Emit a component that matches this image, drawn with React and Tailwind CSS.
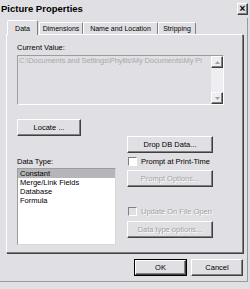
export default function App() {
  const raised =
    "border border-t-white border-l-white border-r-[#404040] border-b-[#404040] shadow-[inset_-1px_-1px_0_#808080]";
  const disabledText = "text-[#a3a3a3] [text-shadow:1px_1px_0_#ffffff]";

  const Button = ({ w, disabled, children }) => (
    <div
      className={`${w} h-[17px] flex items-center justify-center text-[7.5px] leading-none ${raised} ${
        disabled ? disabledText : "text-black"
      }`}
    >
      {children}
    </div>
  );

  const Check = ({ label, disabled }) => (
    <div className="flex items-center h-[9px] ml-[1px]">
      <div
        className={`w-[9px] h-[9px] border border-t-[#808080] border-l-[#808080] border-r-white border-b-white ${
          disabled ? "bg-[#e0dfe3]" : "bg-white"
        }`}
      />
      <span className={`ml-[4px] text-[7.5px] leading-[9px] ${disabled ? disabledText : "text-black"}`}>
        {label}
      </span>
    </div>
  );

  const Tab = ({ w, active, children, className = "" }) => (
    <div
      className={`${w} ${
        active ? "h-[15px] relative z-10 bg-[#e0dfe3]" : "h-[12px] mb-[1px]"
      } flex items-center justify-center text-[7px] leading-none border-t border-l border-t-white border-l-white border-r border-r-[#808080] rounded-t-[2px] ${className}`}
    >
      {children}
    </div>
  );

  const items = ["Constant", "Merge/Link Fields", "Database", "Formula"];

  return (
    <div className="w-[250px] h-[289px] bg-[#e0dfe3] overflow-hidden font-['Liberation_Sans',Arial,sans-serif] text-black">
      {/* title bar */}
      <div className="h-[18px] flex items-center justify-between pl-[1px] pr-[2px]">
        <span className="text-[9.5px] font-bold leading-none">Picture Properties</span>
        <div className={`w-[11px] h-[12px] flex items-center justify-center ${raised}`}>
          <span className="text-[10px] font-bold leading-none -mt-[1px]">×</span>
        </div>
      </div>

      <div className="w-[248px] h-[264px] border-r border-b border-[#9a9a9a] pt-[2px]">
        {/* tabs */}
        <div className="flex items-end h-[15px] pl-[7px]">
          <Tab w="w-[31px]" active>
            Data
          </Tab>
          <Tab w="w-[44px]" className="ml-[1px]">
            Dimensions
          </Tab>
          <Tab w="w-[75px]">Name and Location</Tab>
          <Tab w="w-[38px]">Stripping</Tab>
        </div>

        {/* panel */}
        <div className="-mt-[1px] ml-[6px] w-[237px] h-[219px] border border-t-white border-l-white border-r-[#808080] border-b-[#808080] shadow-[1px_1px_0_#404040] pt-[8px] pl-[10px]">
          <div className="text-[7.5px] leading-[9px]">Current Value:</div>
          <div className="mt-[3px] w-[207px] h-[50px] flex border border-t-[#9c9c9c] border-l-[#9c9c9c] border-r-white border-b-white">
            <div className="flex-1 overflow-hidden whitespace-nowrap pl-[1px] text-[7.5px] leading-[9px] tracking-[-0.1px] text-[#a9a9a9]">
              {"C:\\Documents and Settings\\Phyllis\\My Documents\\My Pi"}
            </div>
            <div className="w-[12px] flex flex-col justify-between bg-[#eeeef2]">
              <div className={`h-[12px] flex items-center justify-center ${raised}`}>
                <svg width="5" height="3" viewBox="0 0 5 3">
                  <path d="M0 3L2.5 0L5 3Z" fill="#a0a0a0" />
                </svg>
              </div>
              <div className={`h-[12px] flex items-center justify-center ${raised}`}>
                <svg width="5" height="3" viewBox="0 0 5 3">
                  <path d="M0 0L2.5 3L5 0Z" fill="#a0a0a0" />
                </svg>
              </div>
            </div>
          </div>

          <div className="flex gap-[11px]">
            {/* left column */}
            <div className="w-[99px]">
              <div className="mt-[14px]">
                <Button w="w-[64px]">Locate ...</Button>
              </div>
              <div className="mt-[21px] text-[7.5px] leading-[9px]">Data Type:</div>
              <div className="mt-[2px] w-[99px] h-[77px] bg-white border border-t-[#9c9c9c] border-l-[#9c9c9c] border-r-[#d8d8d8] border-b-[#d8d8d8]">
                {items.map((it, i) => (
                  <div
                    key={it}
                    className={`h-[9px] px-[2px] text-[7.5px] leading-[9px] ${i === 0 ? "bg-[#b6b6ba]" : ""}`}
                  >
                    {it}
                  </div>
                ))}
              </div>
            </div>

            {/* right column */}
            <div className="w-[86px]">
              <div className="mt-[31px]">
                <Button w="w-[86px]">Drop DB Data...</Button>
              </div>
              <div className="mt-[4px]">
                <Check label="Prompt at Print-Time" />
              </div>
              <div className="mt-[4px]">
                <Button w="w-[86px]" disabled>
                  Prompt Options...
                </Button>
              </div>
              <div className="mt-[20px]">
                <Check label="Update On File Open" disabled />
              </div>
              <div className="mt-[5px]">
                <Button w="w-[86px]" disabled>
                  Data type options...
                </Button>
              </div>
            </div>
          </div>
        </div>

        {/* footer */}
        <div className="mt-[6px] flex justify-end gap-[4px] pr-[4px]">
          <div className="w-[53px] h-[17px] border border-black">
            <div className={`w-full h-full flex items-center justify-center text-[7.5px] leading-none ${raised}`}>
              OK
            </div>
          </div>
          <Button w="w-[52px]">Cancel</Button>
        </div>
      </div>
    </div>
  );
}
